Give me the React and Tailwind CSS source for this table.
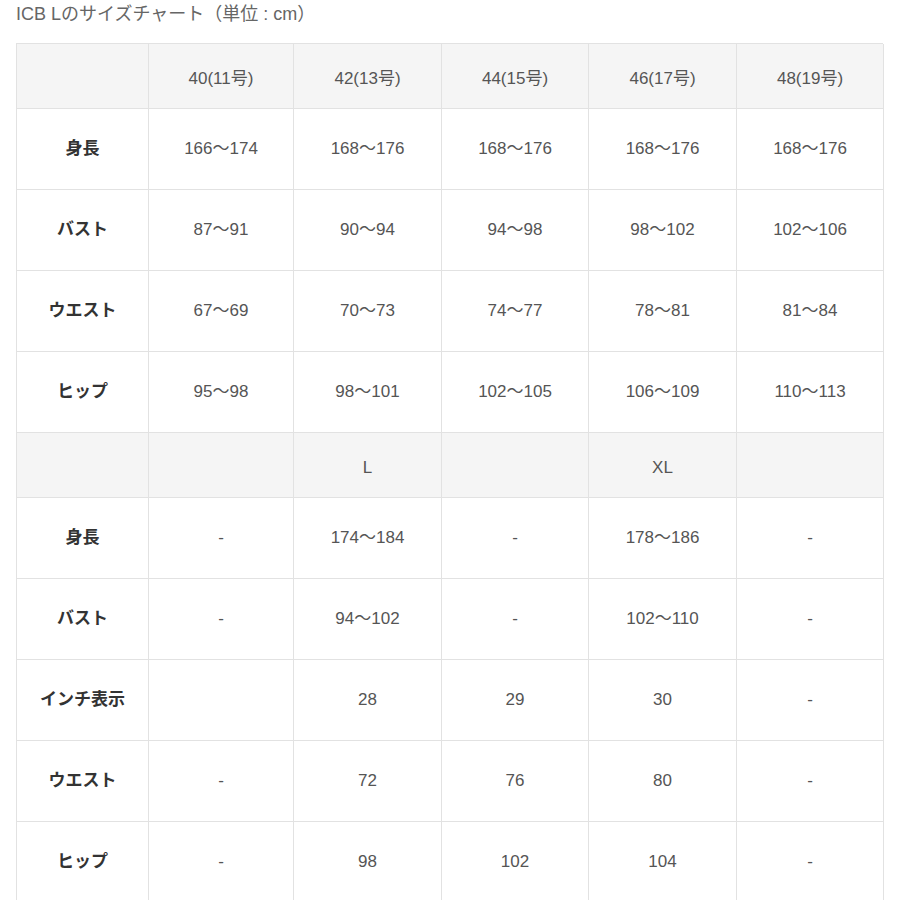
import React from "react";

const F = { fontFamily: '"Liberation Sans", Arial, "Noto Sans CJK JP", sans-serif' };

const rows = [
  { h: true, cells: ["", "40(11号)", "42(13号)", "44(15号)", "46(17号)", "48(19号)"] },
  { cells: ["身長", "166～174", "168～176", "168～176", "168～176", "168～176"] },
  { cells: ["バスト", "87～91", "90～94", "94～98", "98～102", "102～106"] },
  { cells: ["ウエスト", "67～69", "70～73", "74～77", "78～81", "81～84"] },
  { cells: ["ヒップ", "95～98", "98～101", "102～105", "106～109", "110～113"] },
  { h: true, cells: ["", "", "L", "", "XL", ""] },
  { cells: ["身長", "-", "174～184", "-", "178～186", "-"] },
  { cells: ["バスト", "-", "94～102", "-", "102～110", "-"] },
  { cells: ["インチ表示", "", "28", "29", "30", "-"] },
  { cells: ["ウエスト", "-", "72", "76", "80", "-"] },
  { cells: ["ヒップ", "-", "98", "102", "104", "-"] },
];

export default function App() {
  return (
    <div className="w-[900px] h-[900px] overflow-hidden bg-white" style={F}>
      <div className="pl-[16px] pt-[2px] h-[26px] text-[18px] leading-[24px] text-[#666]">
        ICB Lのサイズチャート（単位 : cm）
      </div>
      <div className="ml-[16px] mt-[17px] w-[867px] border-l border-t border-[#e2e2e2] grid grid-cols-[132px_145px_148px_147px_148px_147px]">
        {rows.map((r, i) =>
          r.cells.map((c, j) => (
            <div
              key={i + "-" + j}
              className={
                "flex items-center justify-center border-r border-b border-[#e2e2e2] text-[17px] " +
                (r.h ? "h-[65px] pt-[5px] bg-[#f5f5f5] " : "h-[81px] bg-white ") +
                (j === 0 ? "font-bold text-[#333]" : "text-[#555]")
              }
            >
              {c}
            </div>
          ))
        )}
      </div>
    </div>
  );
}
